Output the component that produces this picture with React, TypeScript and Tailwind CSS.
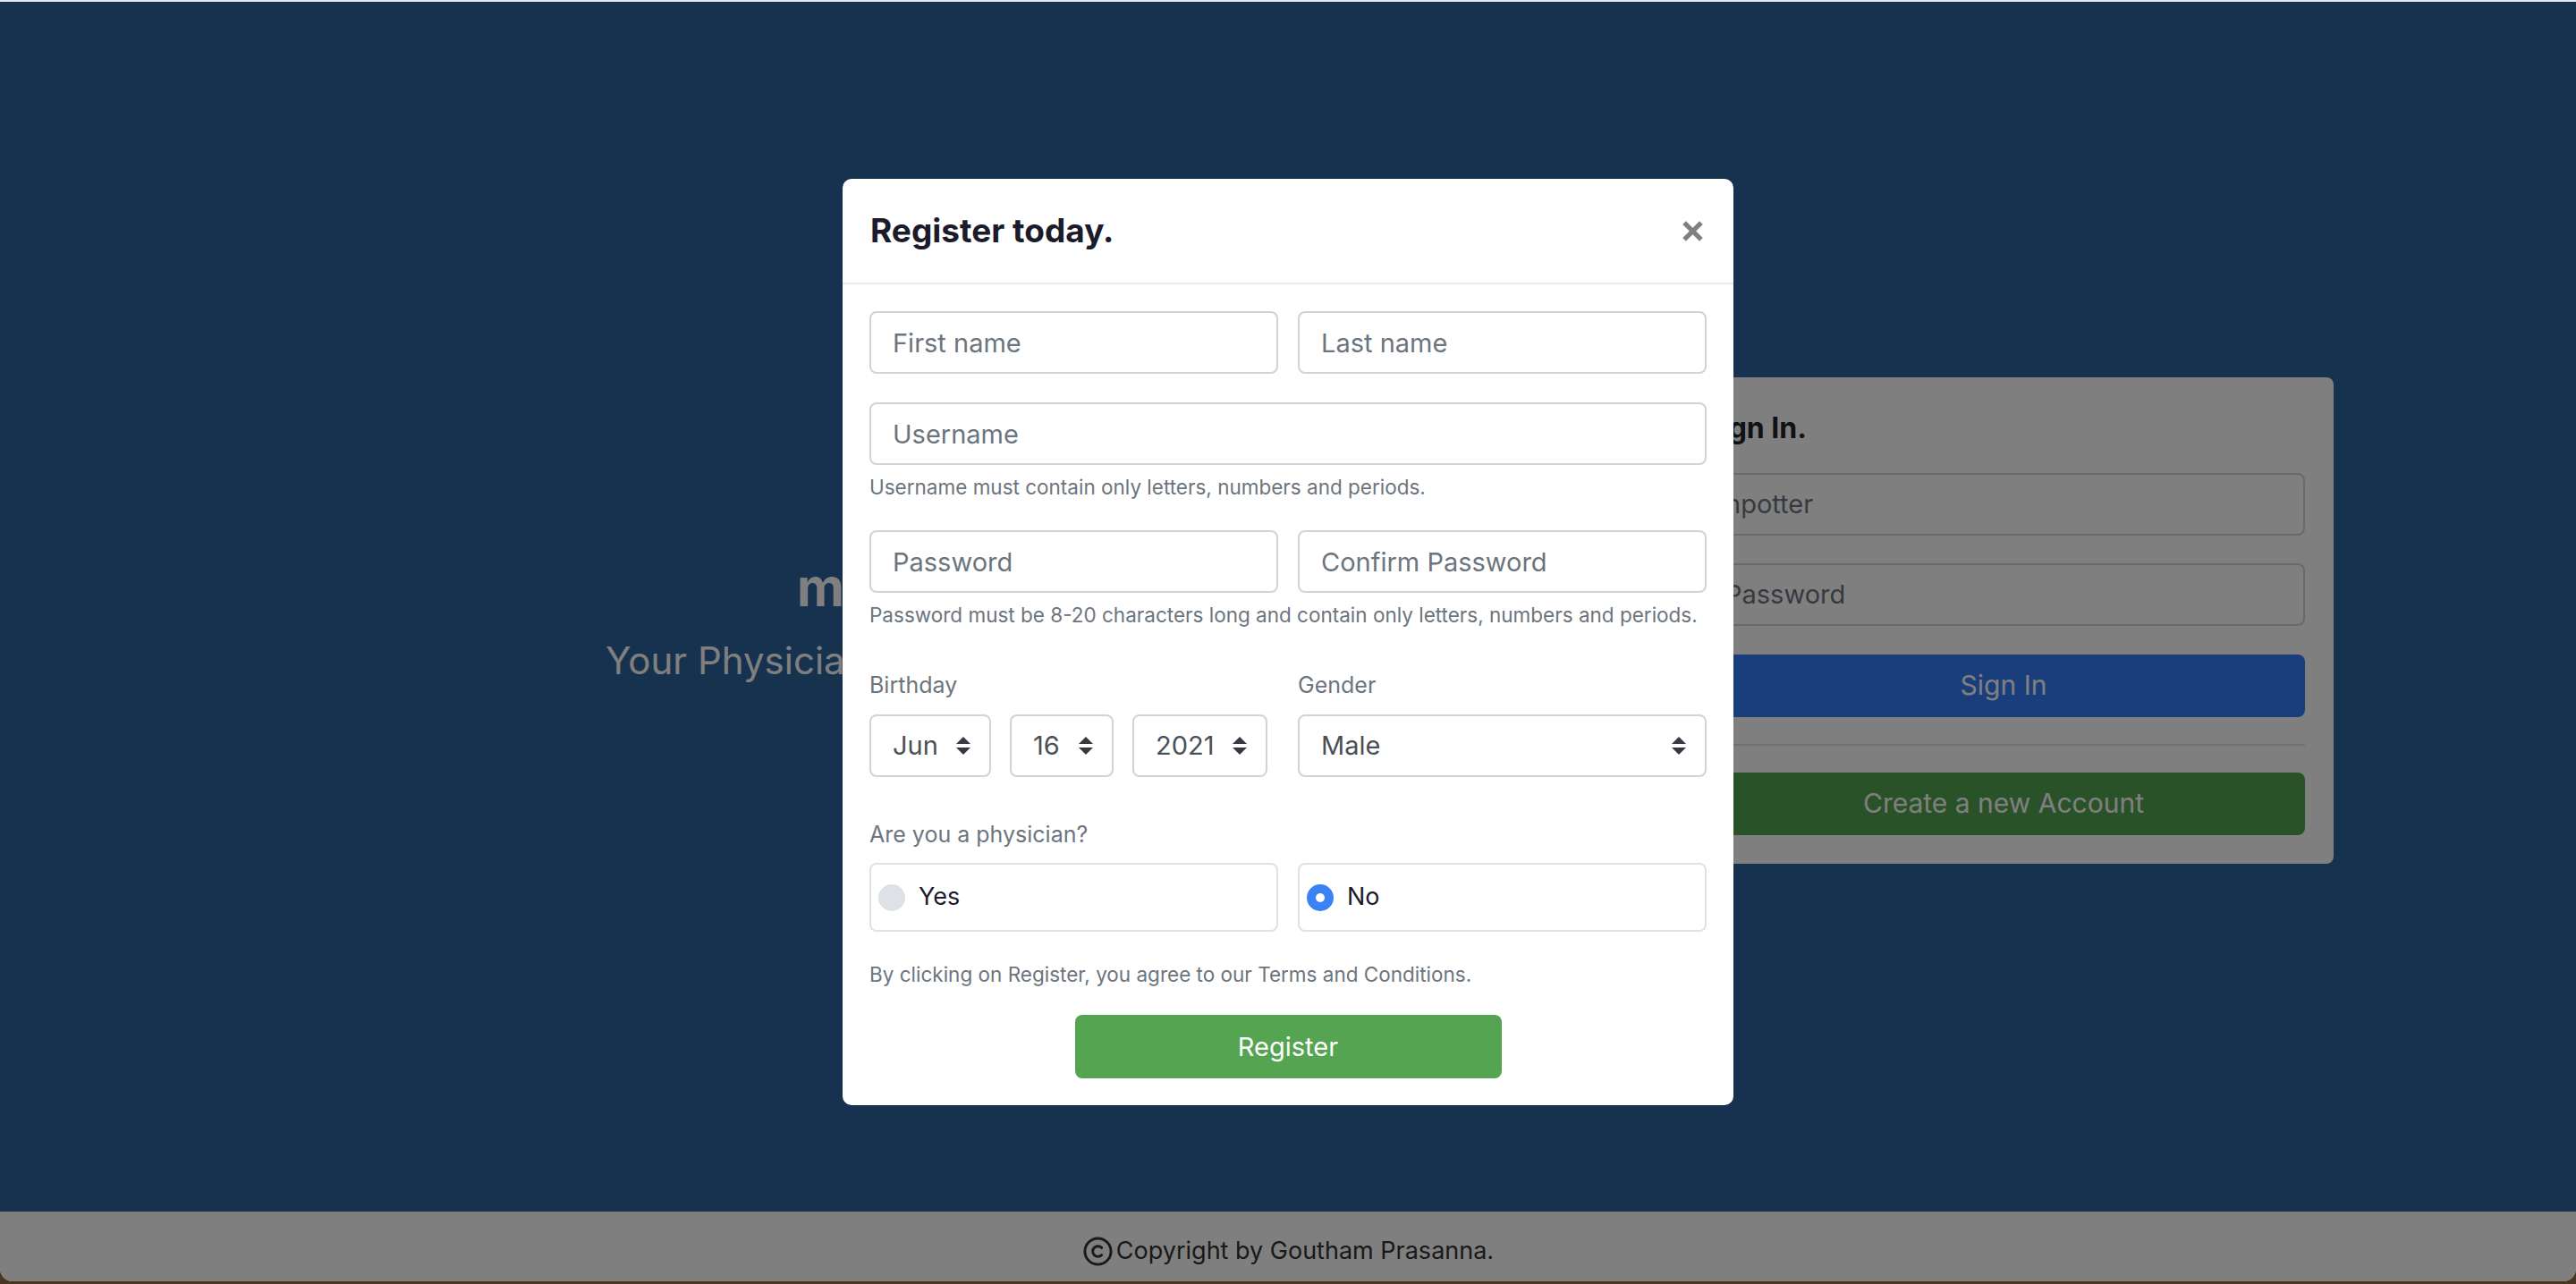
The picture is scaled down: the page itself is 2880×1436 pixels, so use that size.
import React from "react";

const Arrows = () => (
  <svg width="16" height="20" viewBox="0 0 16 20" className="shrink-0" aria-hidden="true">
    <path d="M8 0 L16 8 H0 Z" fill="#343a40" />
    <path d="M0 12 H16 L8 20 Z" fill="#343a40" />
  </svg>
);

const Select = ({ value, className }: { value: string; className: string }) => (
  <div
    className={
      "flex h-[70px] items-center justify-between rounded-[8px] border-2 border-[#ced4da] bg-white pl-[24px] pr-[21px] text-[29px] text-[#495057] " +
      className
    }
  >
    <span>{value}</span>
    <Arrows />
  </div>
);

const Field = ({ placeholder, type = "text" }: { placeholder: string; type?: string }) => (
  <input
    type={type}
    placeholder={placeholder}
    className="h-[70px] w-full rounded-[8px] border-2 border-[#ced4da] bg-white px-[24px] text-[29px] text-[#495057] outline-none placeholder:text-[#6c757d]"
  />
);

const Radio = ({ label, checked }: { label: string; checked?: boolean }) => (
  <label className="flex h-[77px] items-center rounded-[8px] border-2 border-[#dee2e6] bg-white pl-[8px]">
    {checked ? (
      <span className="flex h-[30px] w-[30px] items-center justify-center rounded-full bg-[#3b82f6]">
        <span className="h-[10px] w-[10px] rounded-full bg-white" />
      </span>
    ) : (
      <span className="h-[30px] w-[30px] rounded-full bg-[#dee2e6]" />
    )}
    <span className="ml-[15px] text-[27px] text-[#1c1b2b]">{label}</span>
  </label>
);

const CopyrightIcon = () => (
  <svg width="35" height="35" viewBox="0 0 24 24" fill="none" stroke="currentColor" strokeWidth="2" strokeLinecap="round" strokeLinejoin="round" aria-hidden="true">
    <circle cx="12" cy="12" r="10" />
    <path d="M14.83 14.83a4 4 0 1 1 0-5.66" />
  </svg>
);

const SignInCard = () => (
  <div className="ml-auto mr-[271px] w-[738px] rounded-[8px] bg-white px-[32px] pb-[32px] pt-[32px]">
    <h2 className="mb-[30px] mt-[5px] text-[32px] font-bold leading-[40px] text-[#212529]">Sign In.</h2>
    <Field placeholder="hpotter" />
    <div className="mt-[31px]">
      <Field placeholder="Password" type="password" />
    </div>
    <button className="mt-[32px] h-[70px] w-full rounded-[8px] bg-[#357df6] text-[30px] text-white">Sign In</button>
    <div className="mt-[30px] h-[2px] bg-[#dee2e6]" />
    <button className="mt-[30px] h-[70px] w-full rounded-[8px] bg-[#54a450] text-[30px] text-white">
      Create a new Account
    </button>
  </div>
);

const RegisterModal = () => (
  <div className="w-[996px] rounded-[10px] bg-white">
    <div className="flex h-[118px] items-center justify-between border-b-2 border-[#e9ecef] pl-[31px] pr-[34px]">
      <h3 className="text-[37px] font-bold text-[#1c1b2b]">Register today.</h3>
      <svg width="23" height="23" viewBox="0 0 22 22" aria-hidden="true">
        <path d="M2 2 L20 20 M20 2 L2 20" stroke="#808080" strokeWidth="5" />
      </svg>
    </div>
    <div className="px-[30px] pb-[30px] pt-[30px]">
      <div className="grid grid-cols-2 gap-[22px]">
        <Field placeholder="First name" />
        <Field placeholder="Last name" />
      </div>
      <div className="mt-[32px]">
        <Field placeholder="Username" />
      </div>
      <p className="mt-[8px] text-[22.5px] leading-[33px] text-[#6c757d]">
        Username must contain only letters, numbers and periods.
      </p>
      <div className="mt-[32px] grid grid-cols-2 gap-[22px]">
        <Field placeholder="Password" type="password" />
        <Field placeholder="Confirm Password" type="password" />
      </div>
      <p className="mt-[8px] text-[22.5px] leading-[33px] text-[#6c757d]">
        Password must be 8-20 characters long and contain only letters, numbers and periods.
      </p>
      <div className="mt-[44px] grid grid-cols-2 gap-[22px]">
        <div>
          <div className="mb-[15px] text-[25px] leading-[36px] text-[#6c757d]">Birthday</div>
          <div className="flex gap-[21px]">
            <Select value="Jun" className="w-[136px]" />
            <Select value="16" className="w-[116px]" />
            <Select value="2021" className="w-[151px]" />
          </div>
        </div>
        <div>
          <div className="mb-[15px] text-[25px] leading-[36px] text-[#6c757d]">Gender</div>
          <Select value="Male" className="w-full" />
        </div>
      </div>
      <div className="mb-[14px] mt-[46px] text-[25px] leading-[36px] text-[#6c757d]">Are you a physician?</div>
      <div className="grid grid-cols-2 gap-[22px]">
        <Radio label="Yes" />
        <Radio label="No" checked />
      </div>
      <p className="mt-[31px] text-[22.5px] leading-[33px] text-[#6c757d]">
        By clicking on Register, you agree to our Terms and Conditions.
      </p>
      <div className="mt-[29px] flex justify-center">
        <button className="h-[71px] w-[477px] rounded-[8px] bg-[#55a451] text-[29px] text-white">Register</button>
      </div>
    </div>
  </div>
);

export default function App() {
  return (
    <div className="relative h-[1436px] w-full overflow-hidden bg-[#4a3520] font-['Inter','Noto_Sans',sans-serif]">
      <div className="h-[2px] bg-[#e9eaef]" />
      <div className="relative flex h-[1431px] flex-col overflow-hidden rounded-b-[14px]">
        <main className="flex flex-1 items-center bg-[#2e649e] pt-[30px]">
          <div className="pl-[677px] text-white">
            <h1 className="ml-[214px] text-[58px] font-bold leading-[67px]">medico.</h1>
            <p className="mt-[23px] text-[42px] leading-[50px]">Your Physician, just a click away.</p>
          </div>
          <SignInCard />
        </main>
        <footer className="flex h-[78px] items-center justify-center gap-[3px] bg-white pt-[10px] text-[27px] text-[#333]">
          <CopyrightIcon />
          <span>Copyright by Goutham Prasanna.</span>
        </footer>
        <div className="absolute inset-0 bg-black/50" />
        <div className="absolute inset-x-0 top-[198px] flex justify-center">
          <RegisterModal />
        </div>
      </div>
    </div>
  );
}
